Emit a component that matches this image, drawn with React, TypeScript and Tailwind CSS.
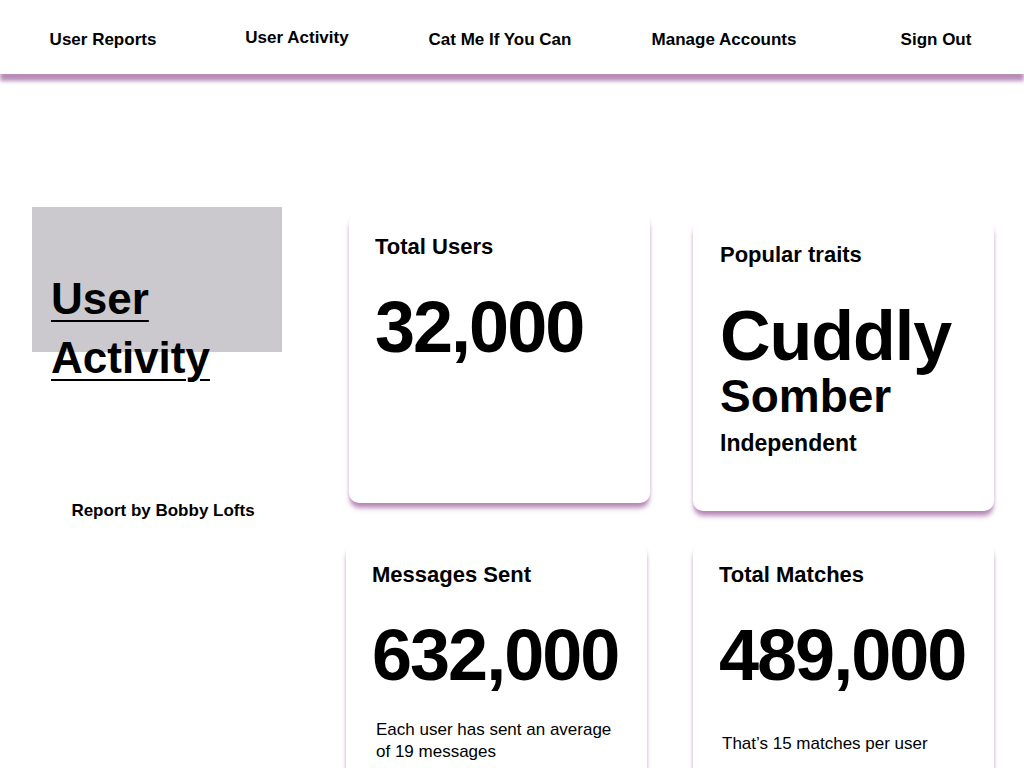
const font = { fontFamily: '"Liberation Sans", Arial, sans-serif' };

const navItems = [
  { label: "User Reports", cls: "w-[206px]" },
  { label: "User Activity", cls: "w-[182px] mb-[4px]" },
  { label: "Cat Me If You Can", cls: "w-[224px]" },
  { label: "Manage Accounts", cls: "w-[224px]" },
  { label: "Sign Out", cls: "w-[176px] ml-[12px]" },
];

const cardShadow =
  "rounded-[10px] bg-white shadow-[0_6px_5px_-1px_rgba(165,110,165,0.75),0_3px_4px_-2px_rgba(175,130,175,0.6)]";

const StatCard = ({
  title,
  value,
  className,
  children,
}: {
  title: string;
  value: string;
  className?: string;
  children?: React.ReactNode;
}) => (
  <div className={`${cardShadow} ${className ?? ""}`}>
    <h2 className="text-[22px] leading-[28px] font-bold">{title}</h2>
    <div className="mt-[30px] text-[72px] leading-none font-bold tracking-[-2px]">{value}</div>
    {children}
  </div>
);

export default function App() {
  return (
    <div className="min-h-screen bg-white text-black" style={font}>
      <nav className="h-[74px] pt-[6px] flex items-center bg-white shadow-[0_7px_4px_rgba(180,135,180,0.95)] relative z-10">
        {navItems.map((item) => (
          <a key={item.label} className={`${item.cls} text-center text-[17px] font-bold`}>
            {item.label}
          </a>
        ))}
      </nav>

      <div className="flex pt-[133px]">
        <aside className="w-[326px] shrink-0">
          <div className="ml-[32px] w-[250px] h-[145px] bg-[#cbc9ce] pt-[62px] pl-[19px]">
            <h1 className="text-[44px] leading-[59px] font-bold underline decoration-2 underline-offset-[6px] w-[200px]">
              User Activity
            </h1>
          </div>
          <p className="mt-[146px] text-center text-[17px] font-bold">Report by Bobby Lofts</p>
        </aside>

        <main className="grid grid-cols-[301px_301px] gap-x-[43px] ml-[23px] mt-[6px] items-start">
          <StatCard title="Total Users" value="32,000" className="h-[290px] pt-[20px] pl-[26px]" />

          <div className={`${cardShadow} h-[291px] mt-[7px] pt-[21px] pl-[27px]`}>
            <h2 className="text-[22px] leading-[28px] font-bold">Popular traits</h2>
            <div className="mt-[32px] text-[70px] leading-none font-bold tracking-[-1px]">Cuddly</div>
            <div className="mt-[2px] text-[46px] leading-none font-bold">Somber</div>
            <div className="mt-[13px] text-[23px] leading-none font-bold">Independent</div>
          </div>

          <StatCard
            title="Messages Sent"
            value="632,000"
            className="-ml-[3px] w-[301px] mt-[32px] h-[300px] pt-[18px] pl-[26px]"
          >
            <p className="mt-[28px] ml-[4px] text-[17px] leading-[22px] w-[250px]">
              Each user has sent an average of 19 messages
            </p>
          </StatCard>

          <StatCard
            title="Total Matches"
            value="489,000"
            className="mt-[32px] h-[300px] pt-[18px] pl-[26px]"
          >
            <p className="mt-[42px] ml-[3px] text-[17px] leading-[22px]">That’s 15 matches per user</p>
          </StatCard>
        </main>
      </div>
    </div>
  );
}
